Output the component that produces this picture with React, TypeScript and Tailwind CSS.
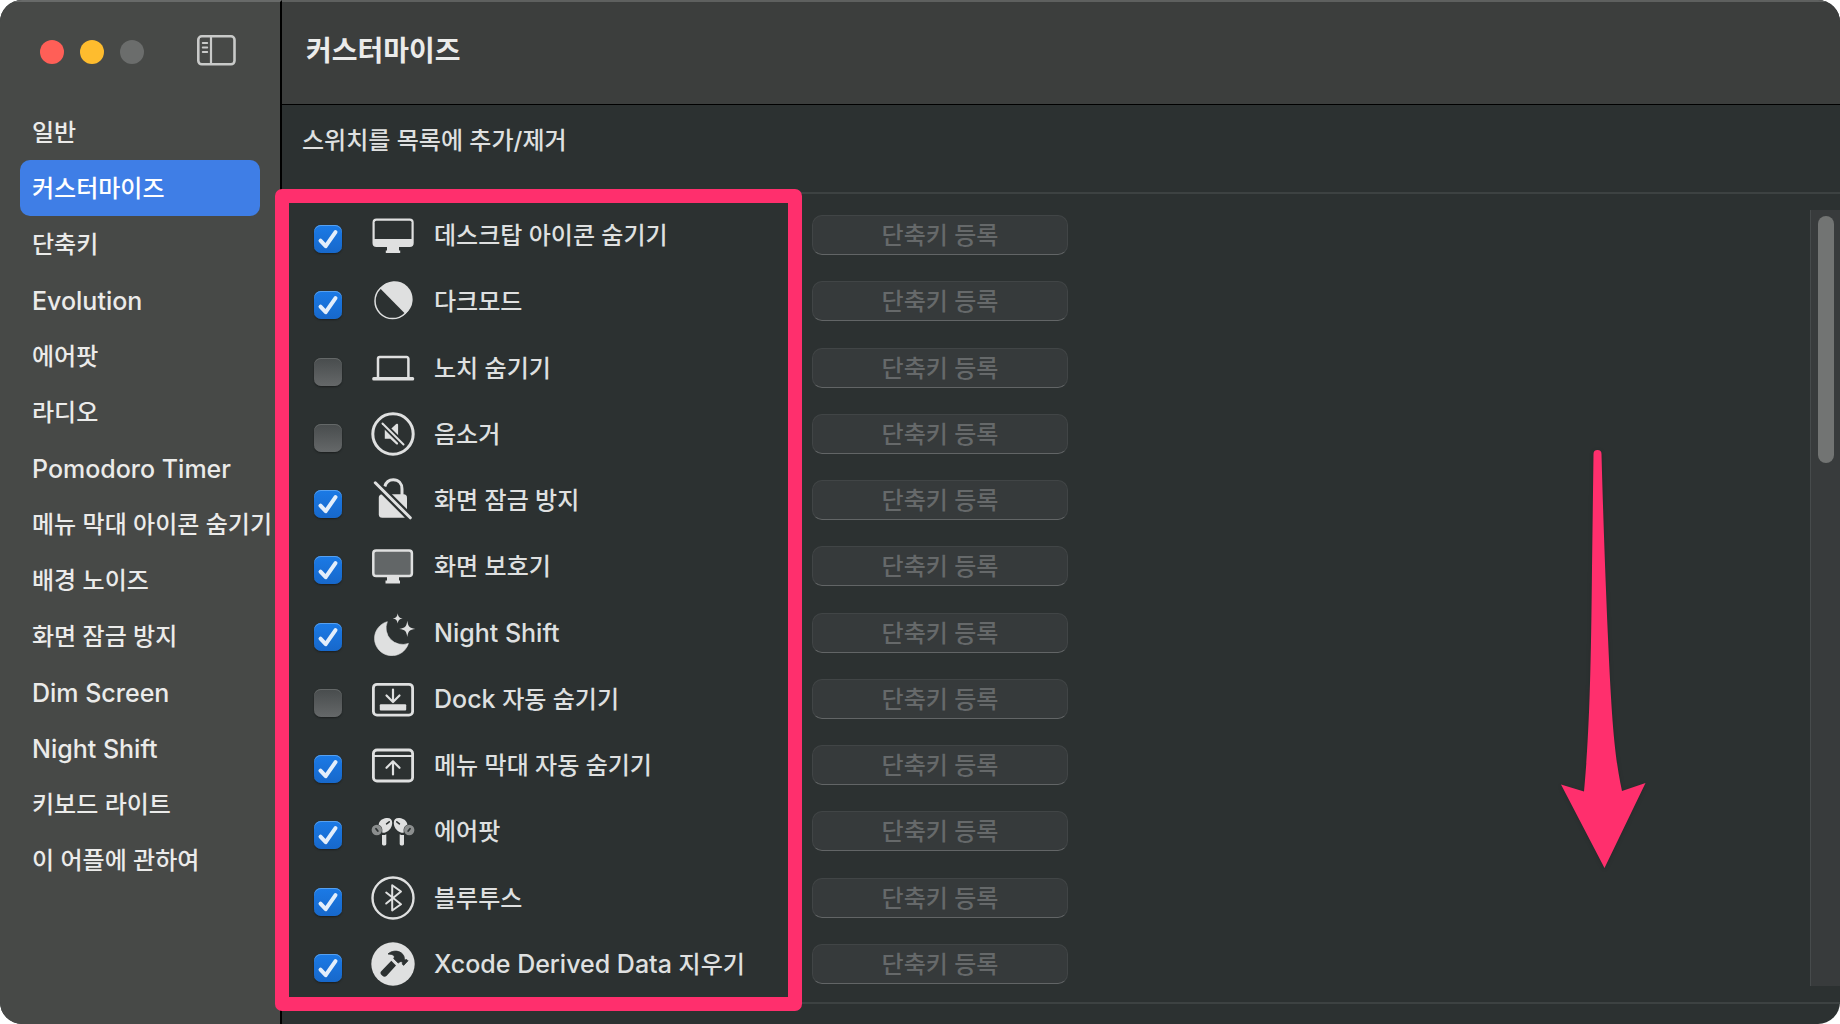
import { useState, type ReactNode } from "react";

const INK = "#dfe0e0";
const PANEL = "#2c3131";

function Icon({ children }: { children: ReactNode }) {
  return (
    <svg viewBox="0 0 46 46" className="h-[46px] w-[46px] shrink-0" fill="none" aria-hidden="true">
      {children}
    </svg>
  );
}

const DesktopIcon = () => (
  <Icon>
    <path d="M6.5 6.5h33.2a4 4 0 0 1 4 4V31a4 4 0 0 1-4 4H29v3.4h1.2V41H15.8v-2.6H17V35H6.5a4 4 0 0 1-4-4V10.500a4 4 0 0 1 4-4z" fill={INK} />
    <path d="M6.300 8.700h33.600a1.600 1.600 0 0 1 1.600 1.600V27H4.700V10.300a1.600 1.600 0 0 1 1.600-1.600z" fill={PANEL} />
  </Icon>
);

const DarkModeIcon = () => (
  <Icon>
    <circle cx="22.6" cy="23" r="17.6" stroke={INK} strokeWidth="1.500" />
    <path d="M10 10.300A18.200 18.200 0 1 1 35.400 35.900z" fill={INK} />
  </Icon>
);

const LaptopIcon = () => (
  <Icon>
    <path d="M8 32.500V13.800a1.800 1.800 0 0 1 1.800-1.800h26.800a1.800 1.800 0 0 1 1.800 1.800v18.700" stroke={INK} strokeWidth="2.500" />
    <rect x="2.200" y="32" width="42" height="3.500" rx="1.500" fill={INK} />
  </Icon>
);

const MuteIcon = () => (
  <Icon>
    <circle cx="23" cy="23" r="20.200" stroke={INK} strokeWidth="3" />
    <path d="M14.800 18.500h5.500L26.200 13a1.100 1.100 0 0 1 1.900.8v18.600a1.100 1.100 0 0 1-1.900.8l-5.900-5.400h-5.500z" fill={INK} />
    <path d="M12.500 12.500l21 21" stroke={PANEL} strokeWidth="5.500" />
    <path d="M12.500 12.500l21 21" stroke={INK} strokeWidth="2" strokeLinecap="round" />
  </Icon>
);

const LockOffIcon = () => (
  <Icon>
    <rect x="8.800" y="17.200" width="28.200" height="23.600" rx="3.500" fill={INK} />
    <path d="M14.800 9.500C16 5 19.200 2.700 23.300 2.700c5.200 0 8.700 3.700 8.700 9.300v7" stroke={INK} strokeWidth="3" />
    <path d="M5.300 5.800l35 35" stroke={PANEL} strokeWidth="7.500" />
    <path d="M5.300 5.800l35 35" stroke={INK} strokeWidth="3" strokeLinecap="round" />
  </Icon>
);

const ScreenSaverIcon = () => (
  <Icon>
    <path d="M17 33h12v4.500h1V40.500H15.500v-3h1.500z" fill={INK} />
    <rect x="3.300" y="7.500" width="38.600" height="25.500" rx="2.800" fill="#626667" stroke={INK} strokeWidth="2.500" />
  </Icon>
);

const NightIcon = () => (
  <Icon>
    <path d="M17.300 11.700A17.300 17.300 0 1 0 38.400 33.400 16.500 16.500 0 0 1 17.300 11.700z" fill={INK} stroke={INK} strokeWidth="0.600" strokeLinejoin="round" />
    <path d="M27.700 3.200c.6 3.600 1.500 4.600 5 5.200-3.500.6-4.400 1.600-5 5.200-.6-3.600-1.500-4.600-5-5.200 3.500-.6 4.400-1.600 5-5.200z" fill={INK} />
    <path d="M37.300 10.800c.9 6 2.100 7.300 8 8.100-5.900.8-7.100 2.100-8 8.100-.9-6-2.100-7.300-8-8.100 5.900-.8 7.100-2.100 8-8.100z" fill={INK} />
  </Icon>
);

const DockIcon = () => (
  <Icon>
    <rect x="3.400" y="8.300" width="39.200" height="30.800" rx="3.600" stroke={INK} strokeWidth="2.800" />
    <rect x="9.800" y="28.200" width="26.400" height="6.200" rx="1" fill={INK} />
    <path d="M23 13.500v12M16.500 19.500l6.500 6.500 6.500-6.500" stroke={INK} strokeWidth="2.200" strokeLinecap="round" strokeLinejoin="round" />
  </Icon>
);

const MenuBarIcon = () => (
  <Icon>
    <rect x="3.400" y="8" width="39.200" height="31" rx="3.600" stroke={INK} strokeWidth="2.800" />
    <path d="M4 14h38" stroke={INK} strokeWidth="2" />
    <path d="M23 32.500V20M16.500 25.800L23 19.300l6.500 6.500" stroke={INK} strokeWidth="2.200" strokeLinecap="round" strokeLinejoin="round" />
  </Icon>
);

const Pod = () => (
  <>
    <ellipse cx="6.800" cy="22" rx="5.200" ry="5.200" fill="#8b8e8e" />
    <path d="M6 20.800l1.800 2.200" stroke={PANEL} strokeWidth="1.800" strokeLinecap="round" />
    <path d="M9 15c1.500-3.600 5-5 8.500-5 3 0 4.700 1.800 4.700 4.800 0 4.400-2.600 8.200-7 9.600-1.300.4-2.300.3-3 0 .6-3.800-.2-6.400-3.600-7.700z" fill={INK} />
    <path d="M16.600 15.800l2.600-2" stroke={PANEL} strokeWidth="1.600" strokeLinecap="round" />
    <path d="M12 27c1.500.3 3 0 4.300-.8V36a1.400 1.400 0 0 1-1.400 1.400h-1.500A1.400 1.400 0 0 1 12 36z" fill={INK} />
  </>
);

const AirPodsIcon = () => (
  <Icon>
    <Pod />
    <g transform="matrix(-1 0 0 1 46 0)">
      <Pod />
    </g>
  </Icon>
);

const BluetoothIcon = () => (
  <Icon>
    <circle cx="23" cy="23" r="20.500" stroke={INK} strokeWidth="2.400" />
    <path d="M16.200 17.500L31 29.300l-8.800 6.200V10.200L31 16.500 16.200 28.500" stroke={INK} strokeWidth="2" strokeLinecap="round" strokeLinejoin="round" />
  </Icon>
);

const HammerIcon = () => (
  <Icon>
    <circle cx="23" cy="23" r="21.700" fill={INK} />
    <path d="M21.300 19.800l4.700 4.600-9.300 10.300a3 3 0 0 1-4.300.1l-.8-.8a2.800 2.800 0 0 1 .1-4.200z" fill={PANEL} />
    <path d="M18 13c3.500-3.300 9.500-4 13.500-.9 2 1.600 3 3.600 2.800 5.800l1 .9 1.500-.2 1.200 1.200-4.400 4.600-1.300-1.300.1-1.500-1.300-1.200c-1.200.3-2 .8-2.900 1.700l-4.500-4.500c1.500-2.200.4-4.300-5.700-4.600z" fill={PANEL} stroke={PANEL} strokeWidth="0.800" strokeLinejoin="round" />
  </Icon>
);

/* Latin words are set slightly larger so that they balance the Hangul. */
function Mixed({ text }: { text: string }) {
  const match = text.match(/^[A-Za-z ]+/);
  const latin = match ? match[0] : "";
  return (
    <span className="whitespace-pre">
      {latin && <span className="text-[25px] leading-8">{latin}</span>}
      {text.slice(latin.length)}
    </span>
  );
}

const NAV = [
  "일반",
  "커스터마이즈",
  "단축키",
  "Evolution",
  "에어팟",
  "라디오",
  "Pomodoro Timer",
  "메뉴 막대 아이콘 숨기기",
  "배경 노이즈",
  "화면 잠금 방지",
  "Dim Screen",
  "Night Shift",
  "키보드 라이트",
  "이 어플에 관하여",
];

const SWITCHES = [
  { id: "desktop", name: "데스크탑 아이콘 숨기기", icon: <DesktopIcon />, on: true },
  { id: "dark", name: "다크모드", icon: <DarkModeIcon />, on: true },
  { id: "notch", name: "노치 숨기기", icon: <LaptopIcon />, on: false },
  { id: "mute", name: "음소거", icon: <MuteIcon />, on: false },
  { id: "awake", name: "화면 잠금 방지", icon: <LockOffIcon />, on: true },
  { id: "saver", name: "화면 보호기", icon: <ScreenSaverIcon />, on: true },
  { id: "night", name: "Night Shift", icon: <NightIcon />, on: true },
  { id: "dock", name: "Dock 자동 숨기기", icon: <DockIcon />, on: false },
  { id: "menubar", name: "메뉴 막대 자동 숨기기", icon: <MenuBarIcon />, on: true },
  { id: "airpods", name: "에어팟", icon: <AirPodsIcon />, on: true },
  { id: "bluetooth", name: "블루투스", icon: <BluetoothIcon />, on: true },
  { id: "xcode", name: "Xcode Derived Data 지우기", icon: <HammerIcon />, on: true },
];

function SwitchRow({ id, name, icon, on }: (typeof SWITCHES)[number]) {
  const [checked, setChecked] = useState(on);
  return (
    <li className="flex flex-1 items-center">
      <label htmlFor={id} className="flex w-[498px] shrink-0 items-center">
        <span className="mt-2 grid h-7 w-7 shrink-0">
          <input
            id={id}
            type="checkbox"
            checked={checked}
            onChange={(e) => setChecked(e.target.checked)}
            className="peer col-start-1 row-start-1 h-7 w-7 appearance-none rounded-[7px] bg-linear-to-b from-[#484c4d] to-[#656869] shadow-[0_1px_2px_rgba(0,0,0,0.4),inset_0_1px_0_#646868] checked:from-[#1b7ae6] checked:to-[#1768cb] checked:shadow-[0_1px_2px_rgba(0,0,0,0.4),inset_0_1px_0_#56a0f0]"
          />
          <svg viewBox="0 0 28 28" fill="none" aria-hidden="true" className="pointer-events-none invisible col-start-1 row-start-1 h-7 w-7 peer-checked:visible">
            <path d="M6.500 15.600l5.200 5.600L21.500 7.200" stroke="#e3eefb" strokeWidth="4" strokeLinecap="round" strokeLinejoin="round" />
          </svg>
        </span>
        <span className="ml-7">{icon}</span>
        <span className="ml-[18px] pt-0.5 text-[#dfe0e0]">
          <Mixed text={name} />
        </span>
      </label>
      <button
        type="button"
        className="h-10 w-64 shrink-0 rounded-[10px] border border-[#414546] border-b-[#626566] bg-[#363a3b] pt-0.5 leading-9 font-medium text-[#66696a]"
      >
        단축키 등록
      </button>
    </li>
  );
}

export default function App() {
  return (
    <div className="flex min-h-screen overflow-hidden bg-white font-['Inter','Noto_Sans_CJK_KR',sans-serif] text-2xl">
      <div className="flex min-w-0 flex-1 overflow-hidden rounded-[22px] bg-[#2c3131]">
        <aside className="w-[282px] shrink-0 border-t-2 border-r-2 border-t-[#686a69] border-r-black bg-[#474947]">
          <div className="flex h-[102px] items-start pt-8 pl-10">
            <div className="flex gap-4 pt-1.5">
              <button type="button" aria-label="닫기" className="h-6 w-6 rounded-full bg-[#ff5f57]" />
              <button type="button" aria-label="최소화" className="h-6 w-6 rounded-full bg-[#febc2e]" />
              <button type="button" aria-label="확대" className="h-6 w-6 rounded-full bg-[#6b6d6c]" />
            </div>
            <button type="button" aria-label="사이드바" className="ml-[52px]">
              <svg viewBox="0 0 40 32" fill="none" className="h-8 w-10" aria-hidden="true">
                <rect x="2.300" y="2.300" width="36.200" height="28" rx="3.500" stroke="#c9cac9" strokeWidth="2.600" />
                <path d="M15 2.500v28" stroke="#c9cac9" strokeWidth="2.200" />
                <path d="M6.700 9h4.600M6.700 13.500h4.600M6.700 18h4.600" stroke="#c9cac9" strokeWidth="1.800" strokeLinecap="round" />
              </svg>
            </button>
          </div>
          <nav className="flex flex-col px-5">
            {NAV.map((item) => (
              <a
                key={item}
                href="#"
                aria-current={item === "커스터마이즈" ? "page" : undefined}
                className="flex h-14 items-center rounded-[10px] px-3 pt-0.5 font-medium text-[#ebebea] aria-[current=page]:bg-[#3f7ee6] aria-[current=page]:text-white"
              >
                <Mixed text={item} />
              </a>
            ))}
          </nav>
        </aside>

        <main className="flex min-w-0 flex-1 flex-col">
          <header className="flex h-[105px] shrink-0 items-center border-t-2 border-b border-t-[#5e605f] border-b-black bg-[#3c3e3d] px-6 pb-1">
            <h1 className="text-[28px] leading-10 font-bold text-[#ebebea]">커스터마이즈</h1>
          </header>
          <p className="h-[87px] shrink-0 px-5 pt-[18px] leading-9 font-medium text-[#dfe0e0]">스위치를 목록에 추가/제거</p>

          <section className="relative flex flex-1 border-y-2 border-[#3d4242]">
            <ul className="flex flex-1 flex-col pt-2 pb-[5px] pl-8 font-medium">
              {SWITCHES.map((s) => (
                <SwitchRow key={s.id} {...s} />
              ))}
            </ul>
            <div className="my-4 w-[30px] shrink-0 border-l border-[#474b4c] bg-[#383b3c] pt-1.5 pl-[7px]">
              <div className="h-[247px] w-4 rounded-full bg-[#727473]" />
            </div>

            <div className="pointer-events-none absolute -top-[5px] -bottom-[9px] -left-[7px] w-[527px] rounded-[7px] border-[14px] border-[#ff2f6d]" />
            <svg viewBox="0 0 86 420" className="pointer-events-none absolute top-[254px] right-[194px] h-[420px] w-[86px] drop-shadow-sm" aria-hidden="true">
              <path d="M33.500 6a4 4 0 0 1 8 0C43 62 45 120 48 190 52 280 55 310 62 343l23.500-8L44.500 420 1 336.500l23 7C29 290 31 230 32 120z" fill="#ff2f6d" />
            </svg>
          </section>
          <div className="h-5 shrink-0" />
        </main>
      </div>
    </div>
  );
}
